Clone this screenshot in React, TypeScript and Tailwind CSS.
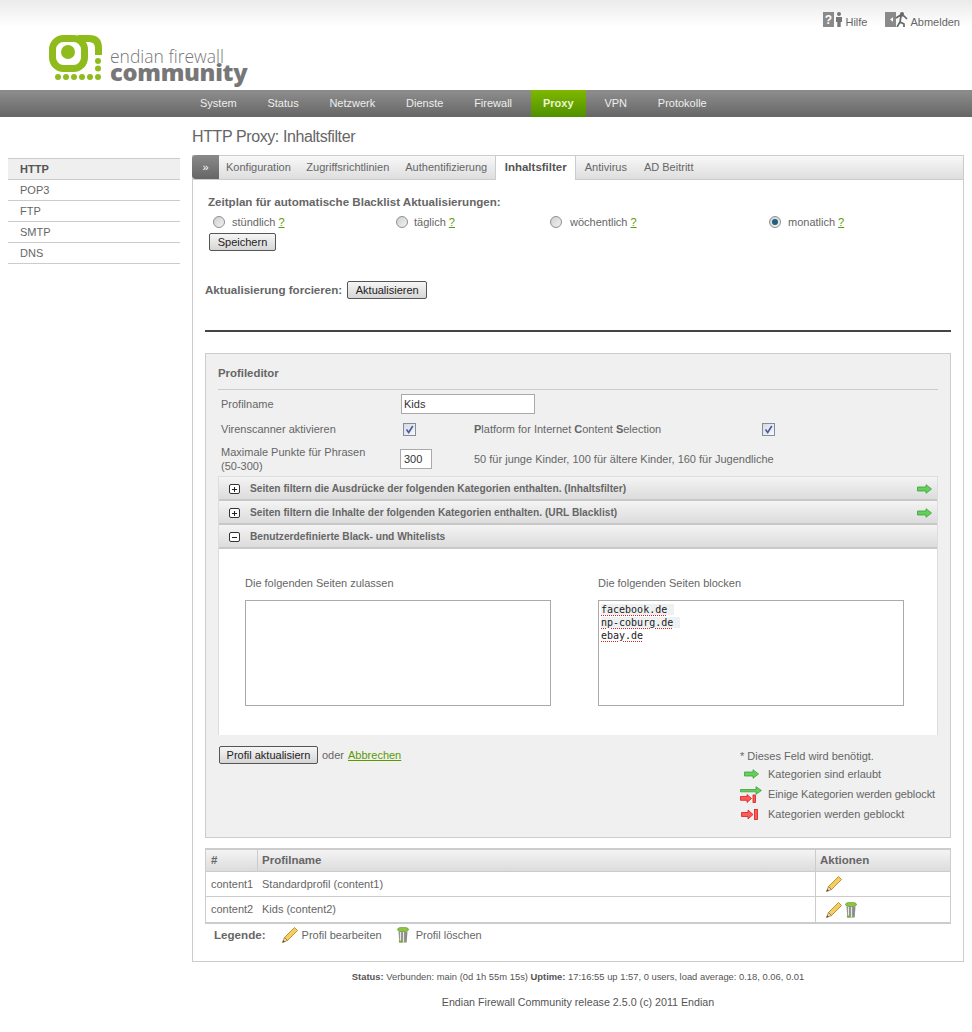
import type { ReactNode } from 'react';

const navItems = ['System', 'Status', 'Netzwerk', 'Dienste', 'Firewall', 'Proxy', 'VPN', 'Protokolle'];
const sideItems = ['POP3', 'FTP', 'SMTP', 'DNS'];
const tabs = ['Konfiguration', 'Zugriffsrichtlinien', 'Authentifizierung'];

function Logo() {
  return (
    <div className="flex items-start">
      <svg width="54" height="47" viewBox="49 35 54 47" className="shrink-0">
        <rect x="52.5" y="38.5" width="32" height="30" rx="11" fill="none" stroke="#8fbc1c" strokeWidth="7" />
        <path d="M78 38.5H89Q98.5 38.5 98.5 48V55" fill="none" stroke="#8fbc1c" strokeWidth="7" />
        <circle cx="68" cy="52" r="7" fill="#8fbc1c" />
        {[58, 66, 74, 82, 90, 98].map((x) => (
          <circle key={x} cx={x} cy="77" r="3" fill="#8fbc1c" />
        ))}
        <circle cx="98" cy="61" r="3" fill="#8fbc1c" />
        <circle cx="98" cy="68.5" r="3" fill="#8fbc1c" />
      </svg>
      <div className="ml-[7px] mt-[14px] flex flex-col">
        <span className="font-['Open_Sans',sans-serif] text-[17.500px] leading-[14px] font-light text-[#777]">endian firewall</span>
        <span className="font-['Open_Sans',sans-serif] text-[23.700px] leading-[18px] font-extrabold tracking-[-0.3px] text-[#777]">community</span>
      </div>
    </div>
  );
}

function HelpIcon() {
  return (
    <svg width="20" height="15" viewBox="0 0 20 15">
      <rect width="11" height="15" fill="#8a8a8a" />
      <text x="5.5" y="12" textAnchor="middle" fontSize="12" fontWeight="700" fill="#fff" fontFamily="Liberation Sans">?</text>
      <circle cx="16" cy="2" r="2" fill="#777" />
      <path d="M13 5h6v5h-1.3v5h-3.4v-5H13z" fill="#777" />
    </svg>
  );
}

function ExitIcon() {
  return (
    <svg width="23" height="15" viewBox="0 0 23 15">
      <rect width="11" height="15" fill="#8a8a8a" />
      <path d="M5 7.5l3-2.200v4.400z" fill="#fff" />
      <circle cx="17" cy="2" r="2" fill="#666" />
      <path d="M11 6l4-2.500 4 .5 3 3M16 4l-1 6-3 5M15 10l4 2v3" fill="none" stroke="#666" strokeWidth="1.700" />
    </svg>
  );
}

function GreenArrow() {
  return (
    <svg width="15" height="10" viewBox="0 0 15 10">
      <path d="M.5 3h8.500V.7L14.500 5 9 9.300V7H.5z" fill="#63d05a" stroke="#3e9f3e" strokeWidth=".8" />
    </svg>
  );
}

function RedArrow() {
  return (
    <svg width="17" height="11" viewBox="0 0 17 11">
      <path d="M.5 3.500h6.500V1l5 4.500L7 10V7.500H.5z" fill="#ff5a5a" stroke="#d02020" strokeWidth=".8" />
      <rect x="13.500" y=".5" width="3" height="10" fill="#ff5a5a" stroke="#d02020" strokeWidth=".8" />
    </svg>
  );
}

function MixedArrow() {
  return (
    <svg width="22" height="17" viewBox="0 0 22 17">
      <path d="M.5 3.500h15.500V.7L21.500 4.500 16 8.300V5.800H.5z" fill="#63d05a" stroke="#3e9f3e" strokeWidth=".8" />
      <path d="M.5 10.500h6.500V8.500l4.500 4-4.500 4v-2.200H.5z" fill="#ff5a5a" stroke="#d02020" strokeWidth=".8" />
      <rect x="13" y="9" width="2.500" height="7.500" fill="#ff5a5a" stroke="#d02020" strokeWidth=".8" />
    </svg>
  );
}

function Pencil() {
  return (
    <svg width="16" height="16" viewBox="0 0 16 16">
      <path d="M12.500 .5l3 3L5.500 13.500l-3-3z" fill="#f3cf63" stroke="#b98b22" strokeWidth=".9" />
      <path d="M2.500 10.500l3 3L.5 15.500z" fill="#f0d9b5" stroke="#8a6a30" strokeWidth=".7" />
      <path d="M1.300 13.200l1.500 1.500-2.300.8z" fill="#5a3a10" />
    </svg>
  );
}

function Trash() {
  return (
    <svg width="12" height="16" viewBox="0 0 12 16">
      <ellipse cx="6" cy="2.500" rx="5.500" ry="2.300" fill="#8cc63f" stroke="#5c8f20" strokeWidth=".6" />
      <path d="M1.500 4.500h9l-.8 11H2.300z" fill="#8b8f88" />
      <path d="M3.500 5v10M6.500 5v10" stroke="#e8e8e8" strokeWidth="1.200" />
      <path d="M1.800 13.500h3.500v2H2z" fill="#7ab32e" />
    </svg>
  );
}

function Radio({ checked }: { checked?: boolean }) {
  return (
    <span className="flex h-[12px] w-[12px] shrink-0 items-center justify-center rounded-full border border-[#8f8f8f] bg-gradient-to-br from-[#cfcfcf] to-[#f2f2f2]">
      {checked && <span className="h-[6px] w-[6px] rounded-full bg-[#1f5f7f]" />}
    </span>
  );
}

function Checkbox() {
  return (
    <span className="flex h-[13px] w-[13px] items-center justify-center border border-[#7f8f9f] bg-gradient-to-br from-[#d8d8e0] to-[#fafafa]">
      <svg width="9" height="9" viewBox="0 0 9 9">
        <path d="M1.500 4.500l2.200 3L7.800 1" fill="none" stroke="#4a5fa8" strokeWidth="1.700" />
      </svg>
    </span>
  );
}

function Btn({ children, className }: { children: ReactNode; className: string }) {
  return (
    <button className={`h-[18px] rounded-[2px] border border-[#555] bg-gradient-to-b from-[#f6f6f6] to-[#d6d6d6] text-center text-[11px] leading-[15px] text-[#222] ${className}`}>
      {children}
    </button>
  );
}

function Help() {
  return <span className="ml-[3px] text-[#5a9a00] underline">?</span>;
}

function AccordionRow({ open, title, arrow }: { open?: boolean; title: string; arrow?: boolean }) {
  return (
    <div className="flex h-[24px] items-center border-b-2 border-[#c8c8c8] bg-gradient-to-b from-[#f4f4f4] to-[#dcdcdc] pl-[10px] pr-[5px] pt-[2px] text-[10.200px] font-bold text-[#666]">
      <span className="flex h-[10px] w-[11px] items-center justify-center rounded-[2px] border border-[#333] bg-white text-[10px] leading-none text-[#222]">
        <span className="relative block h-[1px] w-[5px] bg-[#222]">
          {!open && <span className="absolute left-[2px] top-[-2px] h-[5px] w-[1px] bg-[#222]" />}
        </span>
      </span>
      <span className="ml-[10px] flex-1">{title}</span>
      {arrow && <GreenArrow />}
    </div>
  );
}

function ListBox({ label, children }: { label: string; children?: ReactNode }) {
  return (
    <div className="w-[306px]">
      <div className="text-[11px] leading-[13px] text-[#666]">{label}</div>
      <div className="mt-[10px] h-[106px] border border-[#aaa] bg-white px-[2px] pt-[2px]">{children}</div>
    </div>
  );
}

function Blocked({ host }: { host: string }) {
  return (
    <div className="h-[13px] font-['DejaVu_Sans_Mono',monospace] text-[10px] leading-[13px] text-[#222]">
      <span className="bg-[#eef0f2] pr-[7px]">
        <span className="underline decoration-[#e02020] decoration-dotted underline-offset-2">{host}</span>
      </span>
    </div>
  );
}

export default function App() {
  return (
    <div className="h-[1032px] w-[972px] overflow-hidden bg-white font-['Liberation_Sans',Arial,sans-serif] text-[11px] text-[#666]">
      {/* Header */}
      <div className="h-[90px] bg-gradient-to-b from-[#ebebeb] via-white via-[30%] to-white">
        <div className="flex h-[35px] items-start justify-end pr-[12px] pt-[12px]">
          <div className="flex items-end">
            <HelpIcon />
            <span className="relative top-[1px] ml-[2px] text-[11px] leading-[11px]">Hilfe</span>
          </div>
          <div className="ml-[18px] flex items-end">
            <ExitIcon />
            <span className="relative top-[1px] ml-[2px] text-[11px] leading-[11px]">Abmelden</span>
          </div>
        </div>
        <div className="pl-[49px]">
          <Logo />
        </div>
      </div>

      {/* Main nav */}
      <div className="flex h-[27px] items-stretch border-t-2 border-[#8a8a8a] bg-gradient-to-b from-[#8c8c8c] to-[#666] pb-[2px] pl-[184.600px] text-[11px] text-[#eee]">
        {navItems.map((item) =>
          item === 'Proxy' ? (
            <div key={item} className="mx-[3.500px] -mb-[2px] -mt-[2px] flex items-center bg-gradient-to-b from-[#7fb800] to-[#4f9000] px-3 font-bold text-[#e8f5d0]">
              {item}
            </div>
          ) : (
            <div key={item} className="flex items-center px-[15.400px]">
              {item}
            </div>
          ),
        )}
      </div>

      <div className="flex">
        {/* Sidebar */}
        <div className="ml-[8px] mt-[41px] w-[172px]">
          <div className="flex h-[22px] items-center border-y border-[#ccc] bg-[#efefef] pl-[12px] font-bold text-[#555]">HTTP</div>
          {sideItems.map((item) => (
            <div key={item} className="flex h-[21px] items-center border-b border-[#ccc] pl-[12px]">
              {item}
            </div>
          ))}
        </div>

        {/* Content */}
        <div className="ml-[12px] w-[772px]">
          <h1 className="mt-[10px] h-[28px] text-[16px] leading-[20px] font-normal tracking-[-0.4px] text-[#666]">HTTP Proxy: Inhaltsfilter</h1>

          <div className="h-[807px] border border-[#ccc]">
            {/* Tabs */}
            <div className="flex h-[24px] items-stretch border-b border-[#ccc] bg-gradient-to-b from-[#f8f8f8] to-[#dedede]">
              <div className="-ml-[1px] -mt-[1px] flex h-[24px] w-[27px] items-center justify-center rounded-l-[4px] bg-gradient-to-b from-[#8a8a8a] to-[#666] text-[11px] leading-none text-white">»</div>
              {tabs.map((tab, i) => (
                <div key={tab} className={`flex items-center text-[#666] ${i === 0 ? 'ml-[7px]' : i === 1 ? 'ml-[15.500px]' : 'ml-[16px]'}`}>
                  {tab}
                </div>
              ))}
              <div className="-mt-[1px] ml-[8px] flex h-[25px] w-[81px] items-center justify-center border-x border-t border-[#ccc] bg-white text-[11.500px] font-bold text-[#555]">Inhaltsfilter</div>
              <div className="ml-[8.500px] flex items-center">Antivirus</div>
              <div className="ml-[17px] flex items-center">AD Beitritt</div>
            </div>

            <div className="pl-[12px] pr-[12px]">
              <div className="ml-[3px] mt-[15px] text-[11.600px] leading-[13px] font-bold text-[#666]">Zeitplan für automatische Blacklist Aktualisierungen:</div>
              <div className="ml-[8px] mt-[7px] flex h-[14px] items-center">
                <div className="flex w-[183px] items-center">
                  <Radio />
                  <span className="ml-[7px]">stündlich</span>
                  <Help />
                </div>
                <div className="flex w-[154px] items-center">
                  <Radio />
                  <span className="ml-[6px]">täglich</span>
                  <Help />
                </div>
                <div className="flex w-[219px] items-center">
                  <Radio />
                  <span className="ml-[8px]">wöchentlich</span>
                  <Help />
                </div>
                <div className="flex items-center">
                  <Radio checked />
                  <span className="ml-[7px]">monatlich</span>
                  <Help />
                </div>
              </div>
              <Btn className="ml-[4px] mt-[4px] block w-[67px]">Speichern</Btn>

              <div className="mt-[30px] flex items-center">
                <span className="text-[11.600px] font-bold text-[#666]">Aktualisierung forcieren:</span>
                <Btn className="ml-[5px] w-[80px]">Aktualisieren</Btn>
              </div>

              <div className="mt-[31px] h-[2px] bg-[#444]" />

              {/* Profile editor */}
              <div className="mt-[21px] h-[485px] border border-[#ccc] bg-[#f0f0f0] px-[12px]">
                <div className="flex h-[36px] items-end border-b border-[#ccc] pb-[9px] text-[11.400px] font-bold leading-[13px] text-[#666]">Profileditor</div>
                <div className="ml-[3px] mt-[4px] flex h-[20px] items-center">
                  <span className="w-[180px]">Profilname</span>
                  <div className="flex h-[20px] w-[134px] items-center border border-[#aaa] bg-white pl-[2px] text-[#333]">Kids</div>
                </div>
                <div className="ml-[3px] mt-[5px] flex h-[20px] items-center">
                  <span className="w-[182px]">Virenscanner aktivieren</span>
                  <Checkbox />
                  <span className="ml-[58px] w-[288px]">
                    <b className="font-bold">P</b>latform for Internet <b className="font-bold">C</b>ontent <b className="font-bold">S</b>election
                  </span>
                  <Checkbox />
                </div>
                <div className="ml-[3px] mt-[7px] flex h-[26px] items-center">
                  <span className="w-[179px] leading-[14px]">
                    Maximale Punkte für Phrasen
                    <br />
                    (50-300)
                  </span>
                  <div className="flex h-[20px] w-[32px] items-center border border-[#aaa] bg-white pl-[3px] text-[#333]">300</div>
                  <span className="ml-[42px]">50 für junge Kinder, 100 für ältere Kinder, 160 für Jugendliche</span>
                </div>

                <div className="mt-[4px] border-x border-t border-[#ddd]">
                  <AccordionRow title="Seiten filtern die Ausdrücke der folgenden Kategorien enthalten. (Inhaltsfilter)" arrow />
                  <AccordionRow title="Seiten filtern die Inhalte der folgenden Kategorien enthalten. (URL Blacklist)" arrow />
                  <AccordionRow open title="Benutzerdefinierte Black- und Whitelists" />
                  <div className="flex h-[186px] gap-[47px] bg-white pl-[26px] pt-[28px]">
                    <ListBox label="Die folgenden Seiten zulassen" />
                    <ListBox label="Die folgenden Seiten blocken">
                      <Blocked host="facebook.de" />
                      <Blocked host="np-coburg.de" />
                      <div className="h-[13px] font-['DejaVu_Sans_Mono',monospace] text-[10px] leading-[13px] text-[#222]">
                        <span className="underline decoration-[#e02020] decoration-dotted underline-offset-2">ebay.de</span>
                      </div>
                    </ListBox>
                  </div>
                </div>

                <div className="flex justify-between">
                  <div className="ml-[1px] mt-[11px] flex h-[18px] items-center">
                    <Btn className="w-[99px]">Profil aktualisiern</Btn>
                    <span className="ml-[4px]">oder</span>
                    <span className="ml-[4px] text-[#5a9a00] underline">Abbrechen</span>
                  </div>
                  <div className="mt-[14px] w-[198px] whitespace-nowrap">
                    <div className="h-[14px] leading-[14px]">* Dieses Feld wird benötigt.</div>
                    <div className="mt-[2px] flex h-[18px] items-center">
                      <span className="ml-[4px] w-[24px]"><GreenArrow /></span>
                      Kategorien sind erlaubt
                    </div>
                    <div className="mt-[2px] flex h-[18px] items-center">
                      <span className="w-[28px]"><MixedArrow /></span>
                      <span className="tracking-[-0.09px]">Einige Kategorien werden geblockt</span>
                    </div>
                    <div className="mt-[2px] flex h-[18px] items-center">
                      <span className="ml-[1px] w-[27px]"><RedArrow /></span>
                      Kategorien werden geblockt
                    </div>
                  </div>
                </div>
              </div>

              {/* Profile table */}
              <div className="mt-[10px] border-x border-b-2 border-t-2 border-[#ccc]">
                <div className="flex h-[22px] items-stretch border-b border-[#ccc] bg-gradient-to-b from-[#f4f4f4] to-[#dcdcdc] text-[11.500px] font-bold text-[#666]">
                  <div className="flex w-[52px] items-center border-r border-[#ccc] pl-[5px]">#</div>
                  <div className="flex w-[558px] items-center border-r border-[#ccc] pl-[4px]">Profilname</div>
                  <div className="flex items-center pl-[4px]">Aktionen</div>
                </div>
                <div className="flex h-[25px] items-stretch border-b border-[#ccc]">
                  <div className="flex w-[52px] items-center pl-[5px]">content1</div>
                  <div className="flex w-[558px] items-center border-r border-[#ccc] pl-[4px]">Standardprofil (content1)</div>
                  <div className="flex items-center pl-[10px]"><Pencil /></div>
                </div>
                <div className="flex h-[25px] items-stretch">
                  <div className="flex w-[52px] items-center pl-[5px]">content2</div>
                  <div className="flex w-[558px] items-center border-r border-[#ccc] pl-[4px]">Kids (content2)</div>
                  <div className="flex items-center pl-[10px]">
                    <Pencil />
                    <span className="ml-[3px]"><Trash /></span>
                  </div>
                </div>
              </div>

              <div className="ml-[9px] mt-[3px] flex h-[16px] items-center">
                <span className="text-[11.600px] font-bold">Legende:</span>
                <span className="ml-[16px]"><Pencil /></span>
                <span className="ml-[4px]">Profil bearbeiten</span>
                <span className="ml-[15px]"><Trash /></span>
                <span className="ml-[7px]">Profil löschen</span>
              </div>
            </div>
          </div>

          <div className="mt-[9px] whitespace-nowrap text-center text-[9.400px] leading-[11px] text-[#555]">
            <b>Status:</b> Verbunden: main (0d 1h 55m 15s) <b>Uptime:</b> 17:16:55 up 1:57, 0 users, load average: 0.18, 0.06, 0.01
          </div>
          <div className="mt-[14px] text-center text-[10.700px] leading-[13px] text-[#555]">Endian Firewall Community release 2.5.0 (c) 2011 Endian</div>
        </div>
      </div>
    </div>
  );
}
